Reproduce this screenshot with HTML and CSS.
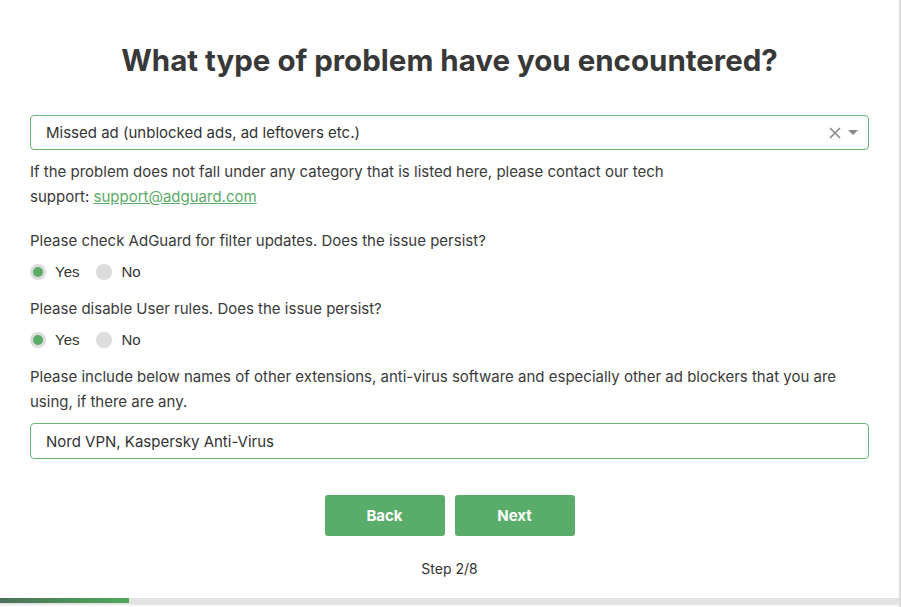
FILE: index.html
```html
<!DOCTYPE html>
<html>
<head>
<meta charset="utf-8">
<link rel="stylesheet" href="styles.css">
</head>
<body>
<div class="page">
  <div class="content">
    <h1 class="title">What type of problem have you encountered?</h1>
    <div class="select">
      <span class="select-value">Missed ad (unblocked ads, ad leftovers etc.)</span>
      <span class="select-icons">
        <svg class="clear" width="12" height="12" viewBox="0 0 12 12"><path d="M1 1L11 11M11 1L1 11" stroke="#888" stroke-width="1.6" fill="none"/></svg>
        <svg class="caret" width="10" height="5" viewBox="0 0 10 5"><path d="M0 0H10L5 5Z" fill="#888"/></svg>
      </span>
    </div>
    <p class="text note">If the problem does not fall under any category that is listed here, please contact our tech<br>support: <a class="link" href="#">support@adguard.com</a></p>
    <p class="text q first">Please check AdGuard for filter updates. Does the issue persist?</p>
    <div class="radios">
      <label class="radio"><span class="dot checked"></span>Yes</label>
      <label class="radio"><span class="dot"></span>No</label>
    </div>
    <p class="text q">Please disable User rules. Does the issue persist?</p>
    <div class="radios">
      <label class="radio"><span class="dot checked"></span>Yes</label>
      <label class="radio"><span class="dot"></span>No</label>
    </div>
    <p class="text q">Please include below names of other extensions, anti-virus software and especially other ad blockers that you are using, if there are any.</p>
    <div class="input">Nord VPN, Kaspersky Anti-Virus</div>
    <div class="buttons">
      <button class="btn">Back</button>
      <button class="btn">Next</button>
    </div>
    <div class="step">Step 2/8</div>
  </div>
  <div class="progress"><div class="progress-fill"></div></div>
</div>
</body>
</html>
```
FILE: styles.css
```css
html, body {
  margin: 0;
  padding: 0;
  background: #fff;
}
.page {
  width: 899px;
  height: 607px;
  border-right: 2px solid #dcdcdc;
  box-sizing: content-box;
  position: relative;
  font-family: Inter, "Noto Sans", sans-serif;
  color: #3a3a3a;
  overflow: hidden;
}
.content {
  padding: 0 30px 0 30px;
  display: flex;
  flex-direction: column;
}
.title {
  margin: 41px 0 0;
  text-align: center;
  font-size: 29.5px;
  line-height: 38px;
  font-weight: 700;
  color: #383838;
  letter-spacing: 0;
}
.select {
  margin-top: 36px;
  height: 35px;
  box-sizing: border-box;
  border: 1px solid #66b574;
  border-radius: 4px;
  display: flex;
  align-items: center;
  padding: 0 10px 0 15px;
  font-size: 15px;
  color: #333;
}
.select-value { flex: 1; }
.select-icons {
  display: flex;
  align-items: center;
  gap: 7px;
}
.text {
  margin: 0;
  font-size: 15px;
  line-height: 25px;
  color: #3a3a3a;
}
.note { margin-top: 9px; }
.link { color: #5aab68; text-decoration: underline; }
.q { margin-top: 12px; }
.q.first { margin-top: 19px; }
.radios {
  display: flex;
  gap: 17px;
  margin-top: 6px;
  height: 25px;
  align-items: center;
  font-family: "Liberation Sans", Arial, sans-serif;
  font-size: 15px;
  color: #333;
}
.radio {
  display: flex;
  align-items: center;
  gap: 9px;
}
.dot {
  width: 16px;
  height: 16px;
  border-radius: 50%;
  background: #dcdcdc;
  position: relative;
}
.dot.checked::after {
  content: "";
  position: absolute;
  left: 3px;
  top: 3px;
  width: 10px;
  height: 10px;
  border-radius: 50%;
  background: #5aab68;
}
.input {
  margin-top: 9px;
  height: 36px;
  box-sizing: border-box;
  border: 1px solid #66b574;
  border-radius: 4px;
  display: flex;
  align-items: center;
  padding: 0 15px;
  font-size: 15px;
  color: #333;
}
.buttons {
  margin-top: 36px;
  display: flex;
  justify-content: center;
  gap: 10px;
}
.btn {
  width: 120px;
  height: 41px;
  border: none;
  border-radius: 3px;
  background: #5aac6a;
  color: #fff;
  font-family: Inter, "Noto Sans", sans-serif;
  font-weight: 700;
  font-size: 15px;
}
.step {
  margin-top: 24px;
  text-align: center;
  font-size: 14px;
  color: #333;
}
.progress {
  position: absolute;
  left: 0;
  right: -2px;
  top: 598px;
  height: 5px;
  background: #e3e3e3;
  box-shadow: 0 2px 2px rgba(0,0,0,0.12);
}
.progress-fill {
  width: 129px;
  height: 100%;
  background: linear-gradient(90deg, #4d7059, #4fa95b);
}
```
